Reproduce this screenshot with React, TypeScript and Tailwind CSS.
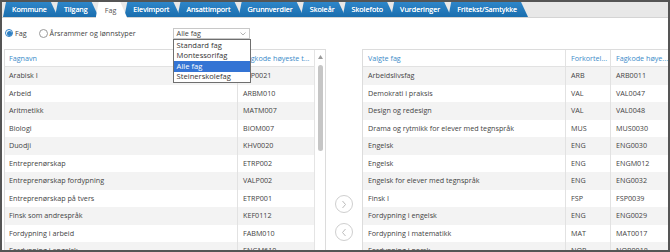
import React from "react";

const tabs = [
  "Kommune",
  "Tilgang",
  "Fag",
  "Elevimport",
  "Ansattimport",
  "Grunnverdier",
  "Skoleår",
  "Skolefoto",
  "Vurderinger",
  "Fritekst/Samtykke",
];

const leftRows = [
  ["Arabisk I", "FSP0021"],
  ["Arbeid", "ARBM010"],
  ["Aritmetikk", "MATM007"],
  ["Biologi", "BIOM007"],
  ["Duodji", "KHV0020"],
  ["Entreprenørskap", "ETRP002"],
  ["Entreprenørskap fordypning", "VALP002"],
  ["Entreprenørskap på tvers", "ETRP001"],
  ["Finsk som andrespråk", "KEF0112"],
  ["Fordypning i arbeid", "FABM010"],
  ["Fordypning i engelsk", "ENGM610"],
];

const rightRows = [
  ["Arbeidslivsfag", "ARB", "ARB0011"],
  ["Demokrati i praksis", "VAL", "VAL0047"],
  ["Design og redesign", "VAL", "VAL0048"],
  ["Drama og rytmikk for elever med tegnspråk", "MUS", "MUS0030"],
  ["Engelsk", "ENG", "ENG0030"],
  ["Engelsk", "ENG", "ENGM012"],
  ["Engelsk for elever med tegnspråk", "ENG", "ENG0032"],
  ["Finsk I", "FSP", "FSP0039"],
  ["Fordypning i engelsk", "ENG", "ENG0029"],
  ["Fordypning i matematikk", "MAT", "MAT0017"],
  ["Fordypning i norsk", "NOR", "NOR0018"],
];

const options = ["Standard fag", "Montessorifag", "Alle fag", "Steinerskolefag"];

const App = () => {
  return (
    <div className="w-[670px] h-[252px] overflow-hidden bg-white border-2 border-[#555] font-['Open_Sans',sans-serif] text-[7.2px] text-[#444]">
      {/* tab bar */}
      <div className="h-[16px] bg-[#e8e8e8] border-b border-[#d4d4d4] flex items-end pl-[1px]">
        {tabs.map((t) => {
          const active = t === "Fag";
          return (
            <div
              key={t}
              className={
                "h-[15px] -mr-[3px] pl-[9px] pr-[11px] flex items-center [clip-path:polygon(3px_0,calc(100%-7px)_0,100%_100%,0_100%)] rounded-tl-[3px] " +
                (active
                  ? "bg-white text-[#555] relative z-10 h-[16px] -mb-[1px]"
                  : "bg-gradient-to-b from-[#2e86c9] to-[#1a6eae] text-white [text-shadow:0_0_0.4px_#fff]")
              }
            >
              {t}
            </div>
          );
        })}
      </div>

      {/* radio row */}
      <div className="relative h-[31px] flex items-center pl-[3px]">
        <label className="flex items-center gap-[2px]">
          <span className="w-[8px] h-[8px] rounded-full border border-[#2d7fc4] bg-white flex items-center justify-center">
            <span className="w-[5px] h-[5px] rounded-full bg-[#2d7fc4]" />
          </span>
          <span>Fag</span>
        </label>
        <label className="flex items-center gap-[2px] ml-[12px]">
          <span className="w-[9px] h-[9px] rounded-full border border-[#999] bg-white" />
          <span>Årsrammer og lønnstyper</span>
        </label>

        <div className="relative ml-[37px]">
          <div className="w-[77px] h-[11px] border border-[#c8c8c8] bg-white flex items-center justify-between pl-[3px] pr-[3px]">
            <span>Alle fag</span>
            <svg width="6" height="4" viewBox="0 0 6 4">
              <path d="M0.5 0.5 L3 3 L5.5 0.5" fill="none" stroke="#aaa" strokeWidth="0.9" />
            </svg>
          </div>
          <div className="absolute left-0 top-[11px] z-20 w-[78px] bg-white border border-[#6f6f6f] flex flex-col text-[7.6px]">
            {options.map((o) => (
              <div
                key={o}
                className={
                  "h-[10.6px] flex items-center pl-[3px] " +
                  (o === "Alle fag" ? "bg-[#3474d4] text-white" : "text-[#333]")
                }
              >
                {o}
              </div>
            ))}
          </div>
        </div>
      </div>

      {/* tables */}
      <div className="flex items-start pl-[2px]">
        {/* left table */}
        <div className="w-[322px] shrink-0 h-[220px] border border-[#dcdcdc] flex">
          <div className="flex-1 flex flex-col">
            <div className="h-[17px] flex border-b border-[#e2e2e2] text-[#3d8cc9]">
              <div className="w-[232px] flex items-center pl-[4px]">Fagnavn</div>
              <div className="flex-1 flex items-center pl-[5px] border-l border-[#e2e2e2] whitespace-nowrap overflow-hidden">
                Fagkode høyeste t...
              </div>
            </div>
            {leftRows.map(([n, c], i) => (
              <div key={n} className={"h-[17.5px] flex " + (i % 2 === 0 ? "bg-[#f3f3f3]" : "bg-white")}>
                <div className="w-[232px] flex items-center pl-[4px]">{n}</div>
                <div className="flex-1 flex items-center pl-[5px] border-l border-[#e2e2e2]">{c}</div>
              </div>
            ))}
          </div>
          <div className="w-[11px] border-l border-[#e4e4e4] bg-white flex flex-col items-center pt-[5px]">
            <svg width="5" height="4" viewBox="0 0 5 4">
              <path d="M2.5 0 L5 4 L0 4 Z" fill="#9a9a9a" />
            </svg>
            <div className="mt-[6px] w-[5px] h-[86px] rounded-[3px] bg-[#c6c6c6]" />
          </div>
        </div>

        {/* move buttons */}
        <div className="w-[36px] shrink-0 flex flex-col items-center pt-[146px] gap-[10px]">
          <div className="w-[18px] h-[18px] rounded-full border border-[#cfcfcf] flex items-center justify-center">
            <svg width="6" height="9" viewBox="0 0 6 9">
              <path d="M1.5 1 L4.5 4.5 L1.5 8" fill="none" stroke="#bcbcbc" strokeWidth="1" />
            </svg>
          </div>
          <div className="w-[18px] h-[18px] rounded-full border border-[#cfcfcf] flex items-center justify-center">
            <svg width="6" height="9" viewBox="0 0 6 9">
              <path d="M4.5 1 L1.5 4.5 L4.5 8" fill="none" stroke="#bcbcbc" strokeWidth="1" />
            </svg>
          </div>
        </div>

        {/* right table */}
        <div className="w-[340px] shrink-0 h-[220px] border border-[#dcdcdc] flex flex-col">
          <div className="h-[17px] flex border-b border-[#e2e2e2] text-[#3d8cc9]">
            <div className="w-[202px] flex items-center pl-[5px]">Valgte fag</div>
            <div className="w-[45px] flex items-center pl-[5px] border-l border-[#e2e2e2]">Forkortel...</div>
            <div className="flex-1 flex items-center pl-[5px] border-l border-[#e2e2e2]">Fagkode høye...</div>
          </div>
          {rightRows.map(([n, a, c], i) => (
            <div key={i} className={"h-[17.5px] flex " + (i % 2 === 0 ? "bg-[#f3f3f3]" : "bg-white")}>
              <div className="w-[202px] flex items-center pl-[5px]">{n}</div>
              <div className="w-[45px] flex items-center pl-[5px] border-l border-[#e2e2e2]">{a}</div>
              <div className="flex-1 flex items-center pl-[5px] border-l border-[#e2e2e2]">{c}</div>
            </div>
          ))}
        </div>
      </div>
    </div>
  );
};

export default App;
